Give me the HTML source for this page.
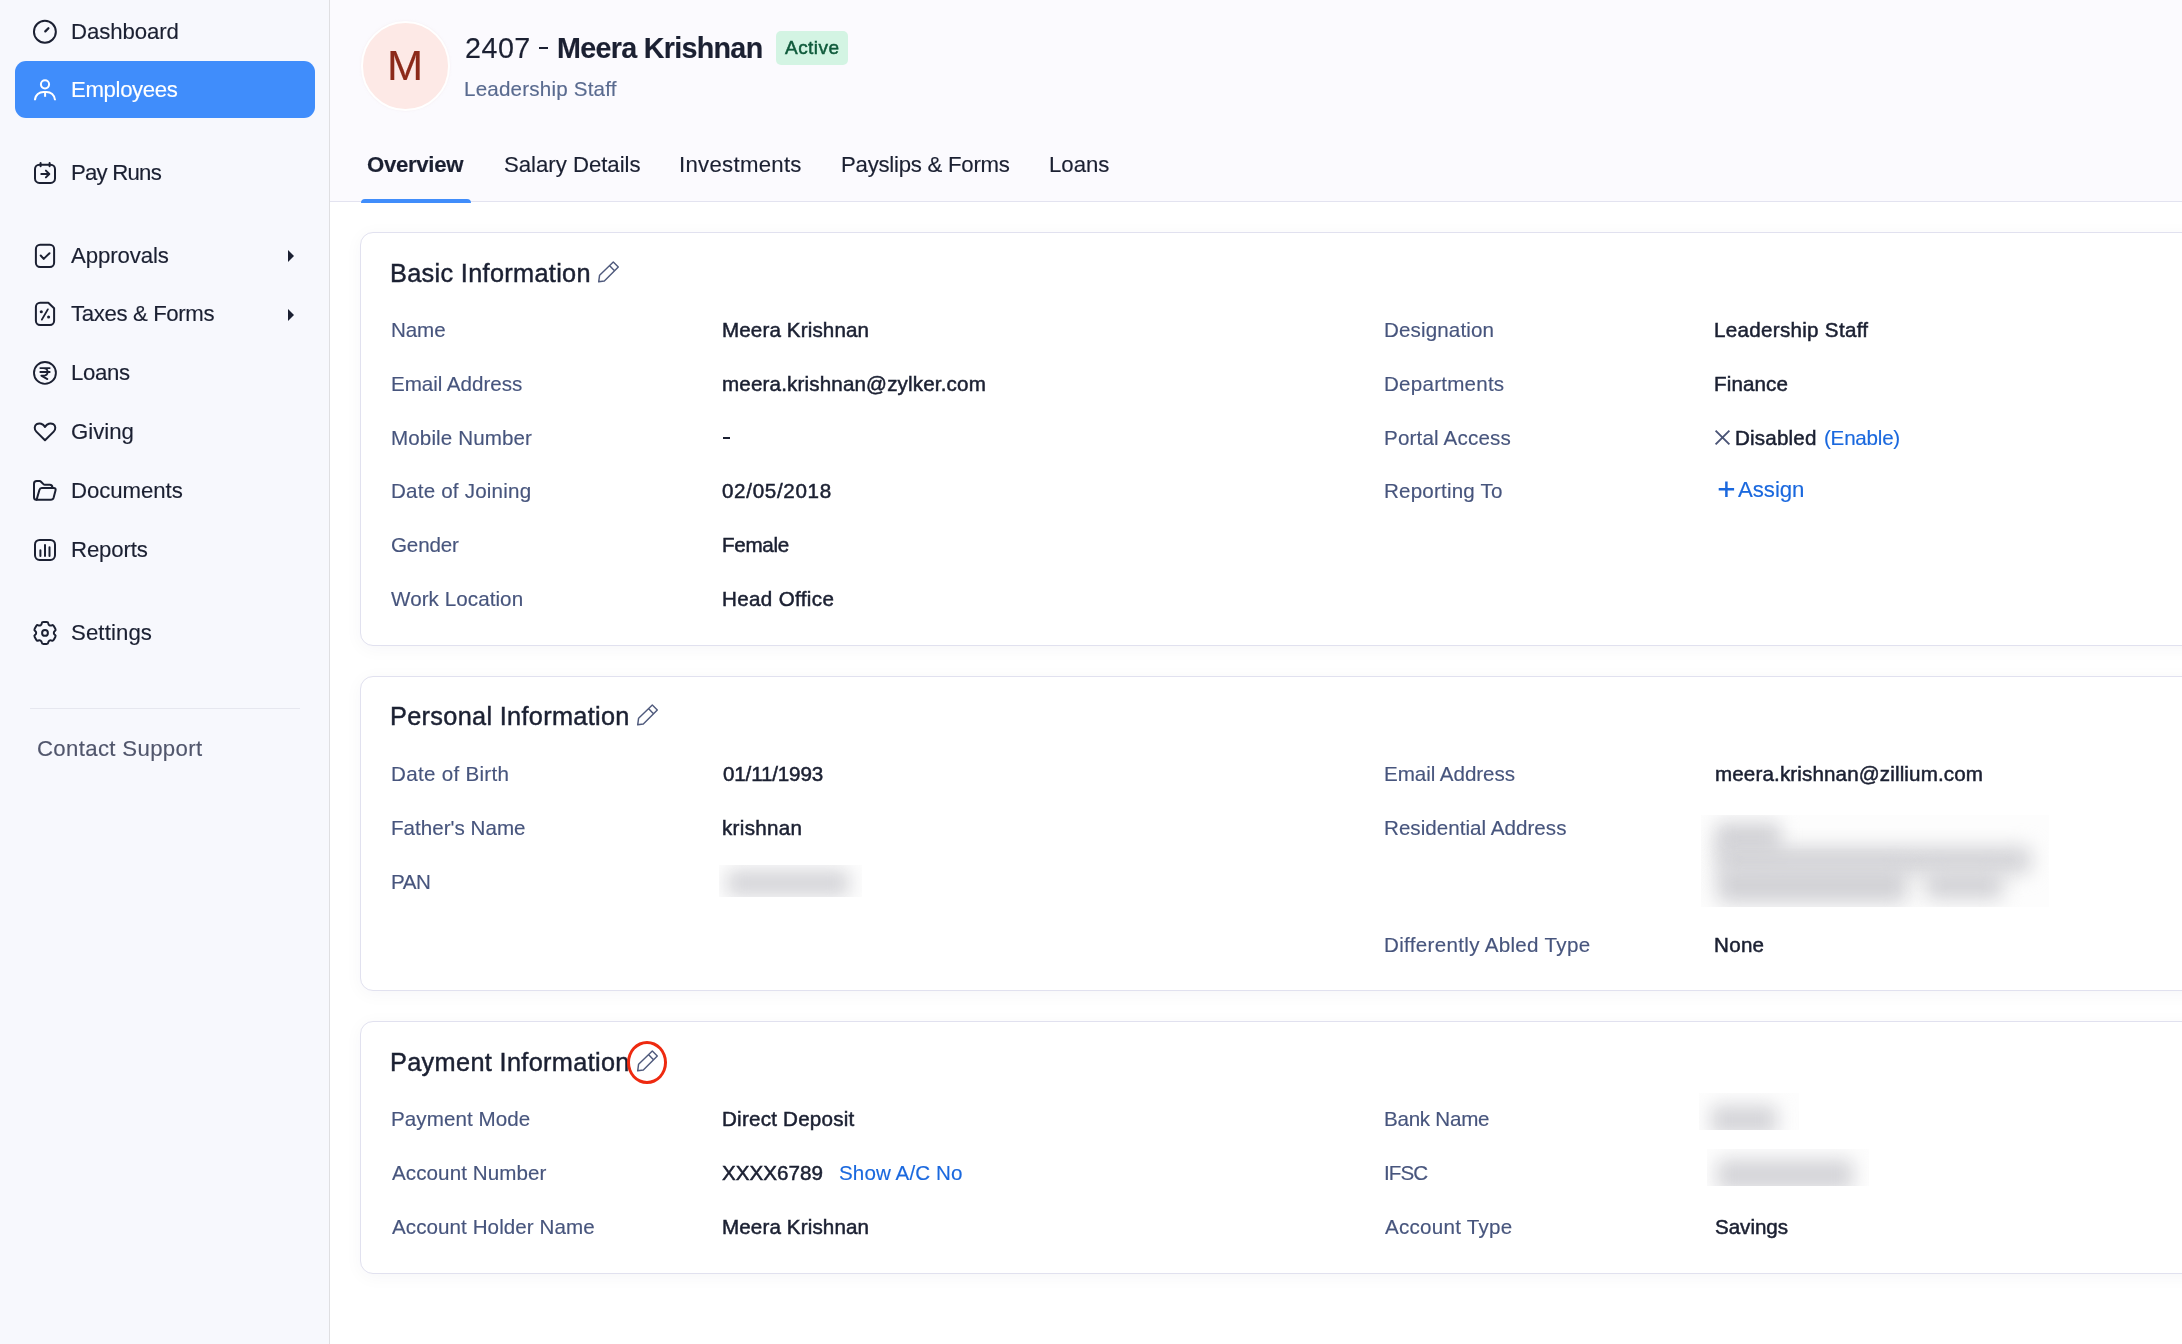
<!DOCTYPE html>
<html lang="en">
<head>
<meta charset="utf-8">
<title>Employee Overview</title>
<style>
*{box-sizing:border-box;margin:0;padding:0}
html,body{width:2182px;height:1344px;overflow:hidden;background:#fff}
body{font-family:"Liberation Sans",sans-serif;color:#1b2032;position:relative}
.x{position:absolute;white-space:nowrap;color:#1b2032;will-change:transform;-webkit-text-stroke-width:.15px}
.hd{-webkit-text-stroke-width:.45px}
.lb{color:#47557d}
.md{-webkit-text-stroke-width:.5px}
.lk{color:#1a68de}
#side{position:absolute;left:0;top:0;width:330px;height:1344px;background:#f7f8fd;border-right:1px solid #dfdfe2}
#pill{position:absolute;left:15px;top:61px;width:300px;height:57px;border-radius:11px;background:#408dfb}
svg.i{position:absolute;left:32px;width:26px;height:26px;overflow:visible}
svg.c{position:absolute;left:287px;width:8px;height:12px}
.ic{fill:none;stroke:#1b2032;stroke-width:2;stroke-linecap:round;stroke-linejoin:round}
.ic.w{stroke:#fff}
.ic .f{fill:#1b2032;stroke:none}
#sdiv{position:absolute;left:30px;top:708px;width:270px;height:1px;background:#e6e7ef}
#head{position:absolute;left:330px;top:0;width:1852px;height:202px;background:#fbfafe;border-bottom:1px solid #e3e3f0}
#av{position:absolute;left:360.6px;top:21.4px;width:89.200px;height:89.200px;border-radius:50%;background:#fde9e6;border:2.600px solid #fff;box-shadow:0 0 2px rgba(240,225,230,.5)}
#badge{position:absolute;left:776px;top:31px;width:72px;height:34px;border-radius:5px;background:#d3f4e3}
#uline{position:absolute;left:361px;top:199px;width:110px;height:4px;background:#408dfb;border-radius:4px 4px 0 0}
.card{position:absolute;left:360px;width:1900px;background:#fff;border:1px solid #e1e1ef;border-radius:13px;box-shadow:0 3px 18px rgba(30,30,70,.04)}
.pen{position:absolute;width:22px;height:22px;overflow:visible}
.pen path{fill:none;stroke:#505b7d;stroke-width:1.450;stroke-linejoin:round;stroke-linecap:round}
.blur{position:absolute;background:#fdfdfd;overflow:hidden}
.blur i{position:absolute;background:#d5d5d9;filter:blur(9px);border-radius:6px}
.blur i.b{background:#d1d1d5;filter:blur(10px)}
</style>
</head>
<body>
<div id="side">
<div id="pill"></div>
<svg class="i" style="top:19px" viewBox="0 0 26 26"><g class="ic"><circle cx="12.900" cy="12.800" r="10.950"/><path d="M13.300 12.400L16.400 9.300" style="stroke-width:2.300"/></g></svg>
<svg class="i" style="top:76px" viewBox="0 0 26 26"><g class="ic w"><circle cx="13" cy="8.300" r="4.100"/><path d="M2.900 24.300C3.200 18.500 7.500 15.900 11.500 15.900L14.500 15.900C18.500 15.900 22.800 18.500 23.100 24.300" style="stroke-linecap:butt"/><path d="M13.100 16V20.800" style="stroke-linecap:butt"/></g></svg>
<svg class="i" style="top:159px" viewBox="0 0 26 26"><g class="ic"><rect x="3" y="5.700" width="20" height="18.200" rx="4.400"/><path d="M8.600 4V7.200M17.600 4V7.200M9.300 15H17.200M13.900 11.600L17.300 15L13.900 18.400"/></g></svg>
<svg class="i" style="top:242px" viewBox="0 0 26 26"><g class="ic"><rect x="3.900" y="2.800" width="18.200" height="22.200" rx="4.200"/><path d="M8.700 13.500L11.700 16.900L17.500 11.200"/></g></svg>
<svg class="c" style="top:250px" viewBox="0 0 8 12"><path d="M1 0L7 6L1 12z" fill="#1b2032"/></svg>
<svg class="i" style="top:300px" viewBox="0 0 26 26"><g class="ic"><path d="M8.100 2.800H16.300L22.100 8.300V20.800a4.200 4.200 0 0 1-4.200 4.200H8.100a4.200 4.200 0 0 1-4.200-4.200V7a4.200 4.200 0 0 1 4.200-4.200z"/><path d="M15.900 9.300L9.800 19.700" style="stroke-width:1.700"/><circle class="f" cx="9.300" cy="11.700" r="1.550"/><circle class="f" cx="16.600" cy="17" r="1.550"/></g></svg>
<svg class="c" style="top:309px" viewBox="0 0 8 12"><path d="M1 0L7 6L1 12z" fill="#1b2032"/></svg>
<svg class="i" style="top:360px" viewBox="0 0 26 26"><g class="ic" style="stroke-width:1.900"><circle cx="12.950" cy="12.900" r="10.950"/><path d="M8.300 8.100H17.700M8.300 12H17.700M8.600 8.100H11.300C14.200 8.100 15.600 9.800 15.600 11.900S14 15.600 11 15.600H9.300L15.400 19.100" style="stroke-width:1.800"/></g></svg>
<svg class="i" style="top:418px" viewBox="0 0 26 26"><g class="ic"><path d="M13 22.300L4.300 13.600C2 11.300 2.300 7.700 4.700 6.200C7.500 4.500 11 5.600 13 8.900C15 5.600 18.500 4.500 21.300 6.200C23.700 7.700 24 11.300 21.700 13.600Z"/></g></svg>
<svg class="i" style="top:477px" viewBox="0 0 26 26"><g class="ic"><path d="M4.500 22.800Q2 22.800 2 20.300V6.800Q2 4.100 4.700 4.100H7.600Q8.400 4.100 9 4.700L11.400 7.100Q12 7.700 12.800 7.700H17.700Q20.400 7.700 20.400 10.400V11"/><path d="M4.600 22.800L7.400 12.900Q7.900 11.050 9.800 11.050H21.600Q24.200 11.050 23.500 13.600L21.600 20.800Q21 22.800 18.800 22.800H4.500"/></g></svg>
<svg class="i" style="top:536px" viewBox="0 0 26 26"><g class="ic"><rect x="3" y="3.900" width="20" height="20" rx="4.600"/><path d="M8.400 14.200V19.900M13 9V19.900M17.500 11.200V19.900"/></g></svg>
<svg class="i" style="top:620px" viewBox="0 0 26 26"><g class="ic"><circle cx="13" cy="12.900" r="2.900"/><path d="M8.59 5.27 Q9.67 4.65 9.75 3.27 L9.75 3.27 Q9.84 1.89 11.44 1.89 L14.56 1.89 Q16.16 1.89 16.25 3.27 L16.25 3.27 Q16.33 4.65 17.41 5.27 L17.41 5.27 Q18.48 5.89 19.72 5.28 L19.72 5.28 Q20.95 4.66 21.75 6.05 L23.31 8.74 Q24.11 10.13 22.96 10.90 L22.96 10.90 Q21.81 11.66 21.81 12.90 L21.81 12.90 Q21.81 14.14 22.96 14.90 L22.96 14.90 Q24.11 15.67 23.31 17.06 L21.75 19.75 Q20.95 21.14 19.72 20.52 L19.72 20.52 Q18.48 19.91 17.41 20.53 L17.41 20.53 Q16.33 21.15 16.25 22.53 L16.25 22.53 Q16.16 23.91 14.56 23.91 L11.44 23.91 Q9.84 23.91 9.75 22.53 L9.75 22.53 Q9.67 21.15 8.59 20.53 L8.59 20.53 Q7.52 19.91 6.28 20.52 L6.28 20.52 Q5.05 21.14 4.25 19.75 L2.69 17.06 Q1.89 15.67 3.04 14.90 L3.04 14.90 Q4.19 14.14 4.19 12.90 L4.19 12.90 Q4.19 11.66 3.04 10.90 L3.04 10.90 Q1.89 10.13 2.69 8.74 L4.25 6.05 Q5.05 4.66 6.28 5.28 L6.28 5.28 Q7.52 5.89 8.59 5.27Z"/></g></svg>
<div id="sdiv"></div>
</div>

<div id="head"></div>
<div id="av"></div>
<div id="badge"></div>
<div id="uline"></div>
<div class="card" style="top:232px;height:414px"></div>
<div class="card" style="top:676px;height:315px"></div>
<div class="card" style="top:1021px;height:252.500px"></div>
<svg class="pen" style="left:598.0px;top:260.5px" viewBox="0 0 22 22"><path d="M15.300 1.100L20.300 6L6.300 20L0.700 20.800L1.600 14.200ZM11.700 4.700L16 9.300"/></svg>
<svg class="pen" style="left:636.5px;top:704.0px" viewBox="0 0 22 22"><path d="M15.300 1.100L20.300 6L6.300 20L0.700 20.800L1.600 14.200ZM11.700 4.700L16 9.300"/></svg>
<svg class="pen" style="left:637.4px;top:1050.0px" viewBox="0 0 22 22"><path d="M15.300 1.100L20.300 6L6.300 20L0.700 20.800L1.600 14.200ZM11.700 4.700L16 9.300"/></svg>
<svg style="position:absolute;left:1714px;top:429px;width:18px;height:18px" viewBox="0 0 18 18"><path d="M1.600 1.700L15.400 15.400M15.400 1.700L1.600 15.400" stroke="#4a5476" stroke-width="1.900" fill="none"/></svg>
<svg style="position:absolute;left:1718px;top:481px;width:17px;height:17px" viewBox="0 0 17 17"><path d="M8.400 .6V16M.7 8.300H16.100" stroke="#1a68de" stroke-width="2.500" fill="none"/></svg>
<div style="position:absolute;left:626.9px;top:1041.2px;width:40px;height:42.700px;border:3.400px solid #ee2a10;border-radius:50%;z-index:5"></div>
<div style="position:absolute;left:539px;top:47px;width:9.100px;height:2.100px;background:#1b2032"></div>
<div style="position:absolute;left:722.900px;top:437.400px;width:7.400px;height:1.700px;background:#1b2032"></div>
<div class="blur" style="left:718.800px;top:864.500px;width:143px;height:32px"><i style="left:8px;top:5px;width:122px;height:26px"></i></div>
<div class="blur" style="left:1700.800px;top:815.100px;width:348px;height:91.800px"><i style="left:14px;top:7px;width:66px;height:34px;filter:blur(9px);background:#d4d4d8"></i><i class="b" style="left:16px;top:32px;width:314px;height:26px"></i><i class="b" style="left:16px;top:52px;width:190px;height:36px"></i><i class="b" style="left:224px;top:56px;width:78px;height:28px"></i></div>
<div class="blur" style="left:1698.700px;top:1093.200px;width:100px;height:36.700px"><i style="left:12px;top:12px;width:66px;height:30px"></i></div>
<div class="blur" style="left:1707px;top:1148.900px;width:161.700px;height:36.900px"><i style="left:10px;top:10px;width:136px;height:32px"></i></div>
<div id="n1" class="x sd" style="left:70.5px;top:19.0px;font-size:22.20px;line-height:25px;letter-spacing:-0.085px;">Dashboard</div>
<div id="n2" class="x sd" style="left:70.5px;top:77.0px;font-size:22.20px;line-height:25px;letter-spacing:-0.356px;color:#fff">Employees</div>
<div id="n3" class="x sd" style="left:70.5px;top:160.0px;font-size:22.20px;line-height:25px;letter-spacing:-0.775px;">Pay Runs</div>
<div id="n4" class="x sd" style="left:70.5px;top:243.0px;font-size:22.20px;line-height:25px;letter-spacing:-0.100px;">Approvals</div>
<div id="n5" class="x sd" style="left:70.5px;top:301.0px;font-size:22.20px;line-height:25px;letter-spacing:-0.367px;">Taxes &amp; Forms</div>
<div id="n6" class="x sd" style="left:70.5px;top:360.0px;font-size:22.20px;line-height:25px;letter-spacing:-0.367px;">Loans</div>
<div id="n7" class="x sd" style="left:70.5px;top:419.0px;font-size:22.20px;line-height:25px;letter-spacing:0.012px;">Giving</div>
<div id="n8" class="x sd" style="left:70.5px;top:478.0px;font-size:22.20px;line-height:25px;letter-spacing:-0.050px;">Documents</div>
<div id="n9" class="x sd" style="left:70.5px;top:537.0px;font-size:22.20px;line-height:25px;letter-spacing:-0.134px;">Reports</div>
<div id="n10" class="x sd" style="left:70.5px;top:620.0px;font-size:22.20px;line-height:25px;letter-spacing:0.110px;">Settings</div>
<div id="cs" class="x sd" style="left:37.0px;top:736.0px;font-size:22.20px;line-height:25px;letter-spacing:0.336px;color:#51566c">Contact Support</div>
<div id="avM" class="x " style="left:387.0px;top:41.0px;font-size:43.40px;line-height:48px;letter-spacing:0.000px;color:#8c2a1a">M</div>
<div id="t1" class="x dk" style="left:465.0px;top:32.0px;font-size:28.70px;line-height:32px;letter-spacing:0.488px;">2407</div>
<div id="t2" class="x dk" style="left:557.0px;top:32.0px;font-size:28.70px;line-height:32px;letter-spacing:-0.698px;font-weight:700">Meera Krishnan</div>
<div id="bd" class="x md" style="left:785.0px;top:37.0px;font-size:19.00px;line-height:21px;letter-spacing:0.456px;color:#0f5a3b">Active</div>
<div id="sub" class="x " style="left:464.0px;top:77.0px;font-size:20.60px;line-height:23px;letter-spacing:0.190px;color:#596a8f">Leadership Staff</div>
<div id="tb1" class="x dk" style="left:367.0px;top:152.0px;font-size:22.20px;line-height:25px;letter-spacing:-0.314px;font-weight:700">Overview</div>
<div id="tb2" class="x dk" style="left:504.0px;top:152.0px;font-size:22.20px;line-height:25px;letter-spacing:-0.023px;">Salary Details</div>
<div id="tb3" class="x dk" style="left:679.0px;top:152.0px;font-size:22.20px;line-height:25px;letter-spacing:0.283px;">Investments</div>
<div id="tb4" class="x dk" style="left:841.0px;top:152.0px;font-size:22.20px;line-height:25px;letter-spacing:-0.249px;">Payslips &amp; Forms</div>
<div id="tb5" class="x dk" style="left:1049.0px;top:152.0px;font-size:22.20px;line-height:25px;letter-spacing:-0.025px;">Loans</div>
<div id="h1" class="x hd" style="left:390.0px;top:259.0px;font-size:25.30px;line-height:28px;letter-spacing:0.319px;">Basic Information</div>
<div id="l1" class="x lb" style="left:391.0px;top:318.0px;font-size:20.60px;line-height:23px;letter-spacing:-0.105px;">Name</div>
<div id="v1" class="x md" style="left:722.0px;top:318.0px;font-size:20.60px;line-height:23px;letter-spacing:0.128px;">Meera Krishnan</div>
<div id="l2" class="x lb" style="left:391.0px;top:372.0px;font-size:20.60px;line-height:23px;letter-spacing:-0.037px;">Email Address</div>
<div id="v2" class="x md" style="left:722.0px;top:372.0px;font-size:20.60px;line-height:23px;letter-spacing:0.155px;">meera.krishnan@zylker.com</div>
<div id="l3" class="x lb" style="left:391.0px;top:426.0px;font-size:20.60px;line-height:23px;letter-spacing:0.111px;">Mobile Number</div>
<div id="l4" class="x lb" style="left:391.0px;top:479.0px;font-size:20.60px;line-height:23px;letter-spacing:0.193px;">Date of Joining</div>
<div id="v4" class="x md" style="left:722.0px;top:479.0px;font-size:20.60px;line-height:23px;letter-spacing:0.671px;">02/05/2018</div>
<div id="l5" class="x lb" style="left:391.0px;top:533.0px;font-size:20.60px;line-height:23px;letter-spacing:-0.168px;">Gender</div>
<div id="v5" class="x md" style="left:722.0px;top:533.0px;font-size:20.60px;line-height:23px;letter-spacing:-0.299px;">Female</div>
<div id="l6" class="x lb" style="left:391.0px;top:587.0px;font-size:20.60px;line-height:23px;letter-spacing:0.069px;">Work Location</div>
<div id="v6" class="x md" style="left:722.0px;top:587.0px;font-size:20.60px;line-height:23px;letter-spacing:0.352px;">Head Office</div>
<div id="l7" class="x lb" style="left:1384.0px;top:318.0px;font-size:20.60px;line-height:23px;letter-spacing:0.120px;">Designation</div>
<div id="v7" class="x md" style="left:1714.0px;top:318.0px;font-size:20.60px;line-height:23px;letter-spacing:0.294px;">Leadership Staff</div>
<div id="l8" class="x lb" style="left:1384.0px;top:372.0px;font-size:20.60px;line-height:23px;letter-spacing:0.224px;">Departments</div>
<div id="v8" class="x md" style="left:1714.0px;top:372.0px;font-size:20.60px;line-height:23px;letter-spacing:0.112px;">Finance</div>
<div id="l9" class="x lb" style="left:1384.0px;top:426.0px;font-size:20.60px;line-height:23px;letter-spacing:0.174px;">Portal Access</div>
<div id="v9" class="x md" style="left:1735.0px;top:426.0px;font-size:20.60px;line-height:23px;letter-spacing:0.174px;">Disabled</div>
<div id="v9b" class="x lk" style="left:1824.0px;top:426.0px;font-size:20.60px;line-height:23px;letter-spacing:-0.233px;">(Enable)</div>
<div id="l10" class="x lb" style="left:1384.0px;top:479.0px;font-size:20.60px;line-height:23px;letter-spacing:0.189px;">Reporting To</div>
<div id="v10" class="x lk" style="left:1738.0px;top:477.0px;font-size:22.20px;line-height:25px;letter-spacing:-0.028px;">Assign</div>
<div id="h2" class="x hd" style="left:390.0px;top:702.0px;font-size:25.30px;line-height:28px;letter-spacing:0.315px;">Personal Information</div>
<div id="l11" class="x lb" style="left:391.0px;top:762.0px;font-size:20.60px;line-height:23px;letter-spacing:0.287px;">Date of Birth</div>
<div id="v11" class="x md" style="left:723.0px;top:762.0px;font-size:20.60px;line-height:23px;letter-spacing:-0.157px;">01/11/1993</div>
<div id="l12" class="x lb" style="left:391.0px;top:816.0px;font-size:20.60px;line-height:23px;letter-spacing:0.008px;">Father's Name</div>
<div id="v12" class="x md" style="left:722.0px;top:816.0px;font-size:20.60px;line-height:23px;letter-spacing:0.311px;">krishnan</div>
<div id="l13" class="x lb" style="left:391.0px;top:870.0px;font-size:20.60px;line-height:23px;letter-spacing:-0.450px;">PAN</div>
<div id="l14" class="x lb" style="left:1384.0px;top:762.0px;font-size:20.60px;line-height:23px;letter-spacing:-0.047px;">Email Address</div>
<div id="v14" class="x md" style="left:1715.0px;top:762.0px;font-size:20.60px;line-height:23px;letter-spacing:0.132px;">meera.krishnan@zillium.com</div>
<div id="l15" class="x lb" style="left:1384.0px;top:816.0px;font-size:20.60px;line-height:23px;letter-spacing:0.024px;">Residential Address</div>
<div id="l16" class="x lb" style="left:1384.0px;top:933.0px;font-size:20.60px;line-height:23px;letter-spacing:0.312px;">Differently Abled Type</div>
<div id="v16" class="x md" style="left:1714.0px;top:933.0px;font-size:20.60px;line-height:23px;letter-spacing:0.275px;">None</div>
<div id="h3" class="x hd" style="left:390.0px;top:1048.0px;font-size:25.30px;line-height:28px;letter-spacing:0.335px;">Payment Information</div>
<div id="l17" class="x lb" style="left:391.0px;top:1107.0px;font-size:20.60px;line-height:23px;letter-spacing:0.068px;">Payment Mode</div>
<div id="v17" class="x md" style="left:722.0px;top:1107.0px;font-size:20.60px;line-height:23px;letter-spacing:0.220px;">Direct Deposit</div>
<div id="l18" class="x lb" style="left:392.0px;top:1161.0px;font-size:20.60px;line-height:23px;letter-spacing:0.084px;">Account Number</div>
<div id="v18" class="x md" style="left:722.0px;top:1161.0px;font-size:20.60px;line-height:23px;letter-spacing:0.045px;">XXXX6789</div>
<div id="v18b" class="x lk" style="left:839.0px;top:1161.0px;font-size:20.60px;line-height:23px;letter-spacing:0.100px;">Show A/C No</div>
<div id="l19" class="x lb" style="left:392.0px;top:1215.0px;font-size:20.60px;line-height:23px;letter-spacing:0.068px;">Account Holder Name</div>
<div id="v19" class="x md" style="left:722.0px;top:1215.0px;font-size:20.60px;line-height:23px;letter-spacing:0.128px;">Meera Krishnan</div>
<div id="l20" class="x lb" style="left:1384.0px;top:1107.0px;font-size:20.60px;line-height:23px;letter-spacing:-0.258px;">Bank Name</div>
<div id="l21" class="x lb" style="left:1384.0px;top:1161.0px;font-size:20.60px;line-height:23px;letter-spacing:-0.943px;">IFSC</div>
<div id="l22" class="x lb" style="left:1385.0px;top:1215.0px;font-size:20.60px;line-height:23px;letter-spacing:0.246px;">Account Type</div>
<div id="v22" class="x md" style="left:1715.0px;top:1215.0px;font-size:20.60px;line-height:23px;letter-spacing:-0.034px;">Savings</div>
</body>
</html>
